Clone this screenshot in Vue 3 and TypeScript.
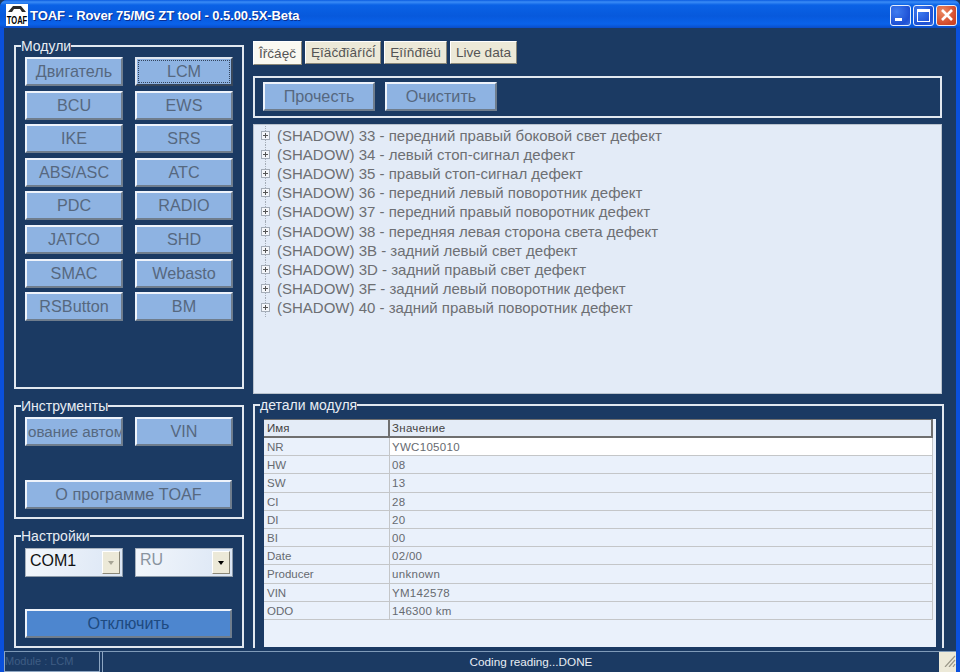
<template>
	<div class="window">
		<header class="titlebar">
			<svg class="app-icon" width="22" height="22" viewBox="0 0 22 22">
				<rect width="22" height="22" fill="#fff" />
				<path d="M2 8 L7 2 L15 2 L20 8 L16 8 L14 5 L8 5 L6 8 Z" fill="#2a2a2a" />
				<text transform="scale(1 1.45)" x="11" y="14" text-anchor="middle" font-size="7.6" font-weight="700">TOAF</text>
			</svg>
			<span class="title">TOAF - Rover 75/MG ZT tool - 0.5.00.5X-Beta</span>
			<div class="caption-btns">
				<span class="cap-btn"><i class="min-glyph" /></span>
				<span class="cap-btn"><i class="max-glyph" /></span>
				<span class="cap-btn close">
					<svg width="16" height="16" viewBox="0 0 16 16"><path d="M3 3 L13 13 M13 3 L3 13" stroke="#fff" stroke-width="2.6" /></svg>
				</span>
			</div>
		</header>

		<main class="client">
			<div class="left">
				<fieldset class="group modules">
					<legend>Модули</legend>
					<div class="btn-grid">
						<button v-for="m in modules" :key="m" class="btn" :class="{ focused: m === 'LCM' }">
							<span>{{ m }}</span>
						</button>
					</div>
				</fieldset>
				<fieldset class="group tools">
					<legend>Инструменты</legend>
					<div class="btn-grid">
						<button class="btn clipped"><span>ование автом</span></button>
						<button class="btn"><span>VIN</span></button>
					</div>
					<button class="btn wide"><span>О программе TOAF</span></button>
				</fieldset>
				<fieldset class="group settings">
					<legend>Настройки</legend>
					<div class="btn-grid">
						<div class="combo">
							<span class="combo-val dark">COM1</span>
							<span class="combo-arrow off"><i /></span>
						</div>
						<div class="combo">
							<span class="combo-val">RU</span>
							<span class="combo-arrow"><i /></span>
						</div>
					</div>
					<button class="btn wide active"><span>Отключить</span></button>
				</fieldset>
			</div>

			<div class="right">
				<nav class="tabs">
					<span v-for="(t, i) in tabs" :key="t" class="tab" :class="{ current: i === 0 }">{{ t }}</span>
				</nav>
				<div class="toolbar">
					<button class="btn tool"><span>Прочесть</span></button>
					<button class="btn tool"><span>Очистить</span></button>
				</div>
				<div class="tree">
					<div v-for="f in faults" :key="f" class="tree-row">
						<span class="expander" />
						<span>{{ f }}</span>
					</div>
				</div>
				<fieldset class="group details">
					<legend>детали модуля</legend>
					<div class="grid-panel">
						<div class="grid-head">
							<span class="col-a">Имя</span>
							<span class="col-b">Значение</span>
						</div>
						<div v-for="(r, i) in details" :key="r[0]" class="grid-row">
							<span class="col-a">{{ r[0] }}</span>
							<span class="col-b" :class="{ selected: i === 0 }">{{ r[1] }}</span>
						</div>
					</div>
				</fieldset>
			</div>
		</main>

		<footer class="statusbar">
			<span class="status-left">Module : LCM</span>
			<span class="status-main">Coding reading...DONE</span>
			<span class="grip">
				<svg width="17" height="15" viewBox="0 0 17 15"><path d="M16 4 L6 15 M16 8 L10 15 M16 12 L14 15" stroke="#9a9788" stroke-width="1.2" /></svg>
			</span>
		</footer>
	</div>
</template>

<script setup lang="ts">
const modules = ["Двигатель", "LCM", "BCU", "EWS", "IKE", "SRS", "ABS/ASC", "ATC", "PDC", "RADIO", "JATCO", "SHD", "SMAC", "Webasto", "RSButton", "BM"];

// labels are mis-decoded in the real app too
const tabs = ["Îřčáęč", "Ęîäčđîâŕíčĺ", "Ęîíňđîëü", "Live data"];

const faults = [
	"(SHADOW) 33 - передний правый боковой свет дефект",
	"(SHADOW) 34 - левый стоп-сигнал дефект",
	"(SHADOW) 35 - правый стоп-сигнал дефект",
	"(SHADOW) 36 - передний левый поворотник дефект",
	"(SHADOW) 37 - передний правый поворотник дефект",
	"(SHADOW) 38 - передняя левая сторона света дефект",
	"(SHADOW) 3B - задний левый свет дефект",
	"(SHADOW) 3D - задний правый свет дефект",
	"(SHADOW) 3F - задний левый поворотник дефект",
	"(SHADOW) 40 - задний правый поворотник дефект",
];

const details = [
	["NR", "YWC105010"],
	["HW", "08"],
	["SW", "13"],
	["CI", "28"],
	["DI", "20"],
	["BI", "00"],
	["Date", "02/00"],
	["Producer", "unknown"],
	["VIN", "YM142578"],
	["ODO", "146300 km"],
];
</script>

<style>
html,
body {
	margin: 0;
	background: #1b3a63;
}
</style>

<style scoped>
.window {
	width: 960px;
	height: 672px;
	box-sizing: border-box;
	display: flex;
	flex-direction: column;
	overflow: hidden;
	font-family: "Liberation Sans", Arial, sans-serif;
	background: #0a50dc;
	border-radius: 7px 7px 0 0;
}

.titlebar {
	height: 28px;
	flex: none;
	display: flex;
	align-items: center;
	padding: 2px 3px 0 6px;
	box-sizing: border-box;
	background: linear-gradient(#0a5be0 0, #3a8cf6 2px, #0a62e6 5px, #0759dc 16px, #0a62ea 24px, #0a4cc8 28px);
}

.app-icon {
	flex: none;
	font-family: "Liberation Sans", sans-serif;
}

.title {
	margin-left: 2px;
	color: #fff;
	font: 700 13px "Liberation Sans", Arial, sans-serif;
	letter-spacing: -0.08px;
	text-shadow: 1px 1px 0 #0a2f90;
	white-space: nowrap;
}

.caption-btns {
	margin-left: auto;
	display: flex;
	gap: 2px;
}

.cap-btn {
	width: 19px;
	height: 19px;
	border: 1px solid #e6effc;
	border-radius: 3px;
	background: radial-gradient(circle at 30% 30%, #3f7df0, #1e50d4 70%, #3a6ee0);
	display: flex;
	align-items: center;
	justify-content: center;
}

.cap-btn.close {
	background: radial-gradient(circle at 30% 30%, #ec8a62, #d0492a 70%, #c8401f);
}

.min-glyph {
	width: 7px;
	height: 3px;
	margin-top: 9px;
	margin-right: 4px;
	background: #fff;
}

.max-glyph {
	width: 13px;
	height: 13px;
	box-sizing: border-box;
	border: 1px solid #fff;
	border-top-width: 3px;
}

.client {
	flex: 1;
	min-height: 0;
	margin: 0 4px;
	background: #1b3a63;
	display: flex;
	gap: 9px;
	padding: 11px 12px 3px 10px;
}

.left {
	width: 230px;
	flex: none;
	display: flex;
	flex-direction: column;
	gap: 10px;
}

.right {
	flex: 1;
	min-width: 0;
	display: flex;
	flex-direction: column;
}

.group {
	margin: 0;
	padding: 0 11px 0 9px;
	box-sizing: border-box;
	border: 2px solid #e2e8f0;
	border-radius: 0;
	min-width: 0;
}

.group legend {
	padding: 0;
	margin-left: -4px;
	color: #e8edf4;
	font-size: 14px;
	line-height: 14px;
}

.modules {
	height: 350px;
}

.tools {
	height: 120px;
}

.settings {
	height: 119px;
}

.btn-grid {
	display: grid;
	grid-template-columns: 98px 98px;
	column-gap: 12px;
	row-gap: 4.6px;
	margin-top: 4px;
}

.settings .btn-grid {
	margin-top: 5px;
}

.btn {
	height: 29px;
	padding: 0;
	box-sizing: border-box;
	border: 2px solid;
	border-color: #eef3fb #6f7d8d #6f7d8d #eef3fb;
	background: #8eb3e2;
	color: #56687f;
	font: 400 16.2px "Liberation Sans", Arial, sans-serif;
	overflow: hidden;
	white-space: nowrap;
	display: flex;
	align-items: center;
	justify-content: center;
}

.btn.focused {
	border-color: #dfe6f0 #39475a #39475a #dfe6f0;
	outline: 1px dotted #33445c;
	outline-offset: -4px;
}

.wide {
	width: 207px;
	margin-top: 34px;
}

.clipped {
	justify-content: flex-start;
	font-size: 15.2px;
}

.clipped span {
	flex: none;
	padding-left: 1px;
}

.active {
	background: #4d86cf;
	color: #1e4a80;
	margin-top: 32px;
}

.combo {
	height: 29px;
	box-sizing: border-box;
	background: linear-gradient(100deg, #f2f6fb, #dbe6f5);
	border: 1px solid;
	border-color: #a8b2be #8d9aa8 #8d9aa8 #a8b2be;
	display: flex;
	align-items: stretch;
	padding: 2px;
}

.combo-val {
	flex: 1;
	color: #8a949f;
	font-size: 16px;
	line-height: 18px;
	padding-left: 2px;
}

.combo-val.dark {
	color: #111;
	line-height: 20px;
}

.combo-arrow {
	width: 16px;
	background: #ece9d8;
	border: 1px solid;
	border-color: #fff #8a8778 #8a8778 #fff;
	display: flex;
	align-items: center;
	justify-content: center;
}

.combo-arrow i {
	border: 3.5px solid transparent;
	border-top: 4px solid #000;
	border-bottom: 0;
}

.combo-arrow.off i {
	border-top-color: #a7a596;
}

.tabs {
	display: flex;
	gap: 3px;
	height: 24px;
	margin-top: 2px;
}

.tab {
	padding: 0 5px;
	display: flex;
	align-items: center;
	box-sizing: border-box;
	height: 23px;
	background: #ece9d8;
	color: #555;
	font-size: 13.6px;
	border: 1px solid;
	border-color: #fff #8a8778 #8a8778 #fff;
}

.tab.current {
	background: #faf9f2;
	height: 24px;
}

.toolbar {
	margin: 11px 2px 0 0;
	height: 42px;
	box-sizing: border-box;
	border: 2px solid #e2e8f0;
	display: flex;
	gap: 10px;
	padding: 4px 8px;
}

.tool {
	width: 112px;
	height: 29px;
}

.tree {
	margin: 6px 2px 0 0;
	height: 270px;
	box-sizing: border-box;
	background: #e3ebf7;
	border: 1px solid #b9c2cd;
	padding: 1px 0 0 7px;
}

.tree-row {
	position: relative;
	height: 19.1px;
	display: flex;
	align-items: center;
	color: #6d6f73;
	font-size: 15px;
	white-space: nowrap;
}

/* dotted connector between the expanders */
.tree-row::before {
	content: "";
	position: absolute;
	left: 4px;
	top: 0;
	bottom: 0;
	border-left: 1px dotted #a5adb8;
}

.expander {
	position: relative;
	width: 9px;
	height: 9px;
	box-sizing: border-box;
	margin-right: 7px;
	border: 1px solid #a5adb8;
	background:
		linear-gradient(#555, #555) center / 5px 1px no-repeat,
		linear-gradient(#555, #555) center / 1px 5px no-repeat,
		#f4f6fa;
}

.details {
	margin-top: 4px;
	flex: 1;
	min-height: 0;
	padding: 0 6px 0 9px;
	border-bottom: 0;
}

.details legend {
	margin-bottom: 7px;
}

.grid-panel {
	height: 228px;
	background: #eaf1fb;
	font-size: 11.5px;
	color: #666a70;
}

.grid-head,
.grid-row {
	display: flex;
	box-sizing: border-box;
	width: 669px;
}

.grid-head {
	height: 19px;
	background: #e4ecf7;
	border-top: 1px solid #6f6f6f;
	border-bottom: 2px solid #6f6f6f;
	border-right: 2px solid #6f6f6f;
	color: #444;
	line-height: 17px;
}

.grid-row {
	height: 18.2px;
	line-height: 18px;
	border-bottom: 1px solid #c4c6c8;
	border-right: 1px solid #c4c6c8;
}

.col-a {
	width: 126px;
	flex: none;
	box-sizing: border-box;
	padding-left: 3px;
	border-right: 1px solid #c4c6c8;
}

.grid-head .col-a {
	border-right: 2px solid #6f6f6f;
}

.col-b {
	flex: 1;
	padding-left: 2px;
	letter-spacing: 0.3px;
}

.selected {
	background: #fff;
}

.statusbar {
	flex: none;
	height: 21px;
	margin: 0 4px;
	box-sizing: border-box;
	background: #1b3a63;
	border-top: 1px solid #7f9ab8;
	display: flex;
	font-size: 11.7px;
	gap: 2px;
	box-shadow: 0 4px 0 #0a50dc;
}

.status-left {
	width: 96px;
	box-sizing: border-box;
	border: 1px solid #8ea6c2;
	border-top: 0;
	color: #3f5d83;
	font-size: 11px;
	line-height: 18px;
	overflow: hidden;
	white-space: nowrap;
}

.status-main {
	flex: 1;
	box-sizing: border-box;
	border-left: 1px solid #8ea6c2;
	color: #e8edf4;
	text-align: center;
	line-height: 20px;
	padding-left: 22px;
}

.grip {
	width: 17px;
	background: #ece9d8;
	flex: none;
}
</style>
